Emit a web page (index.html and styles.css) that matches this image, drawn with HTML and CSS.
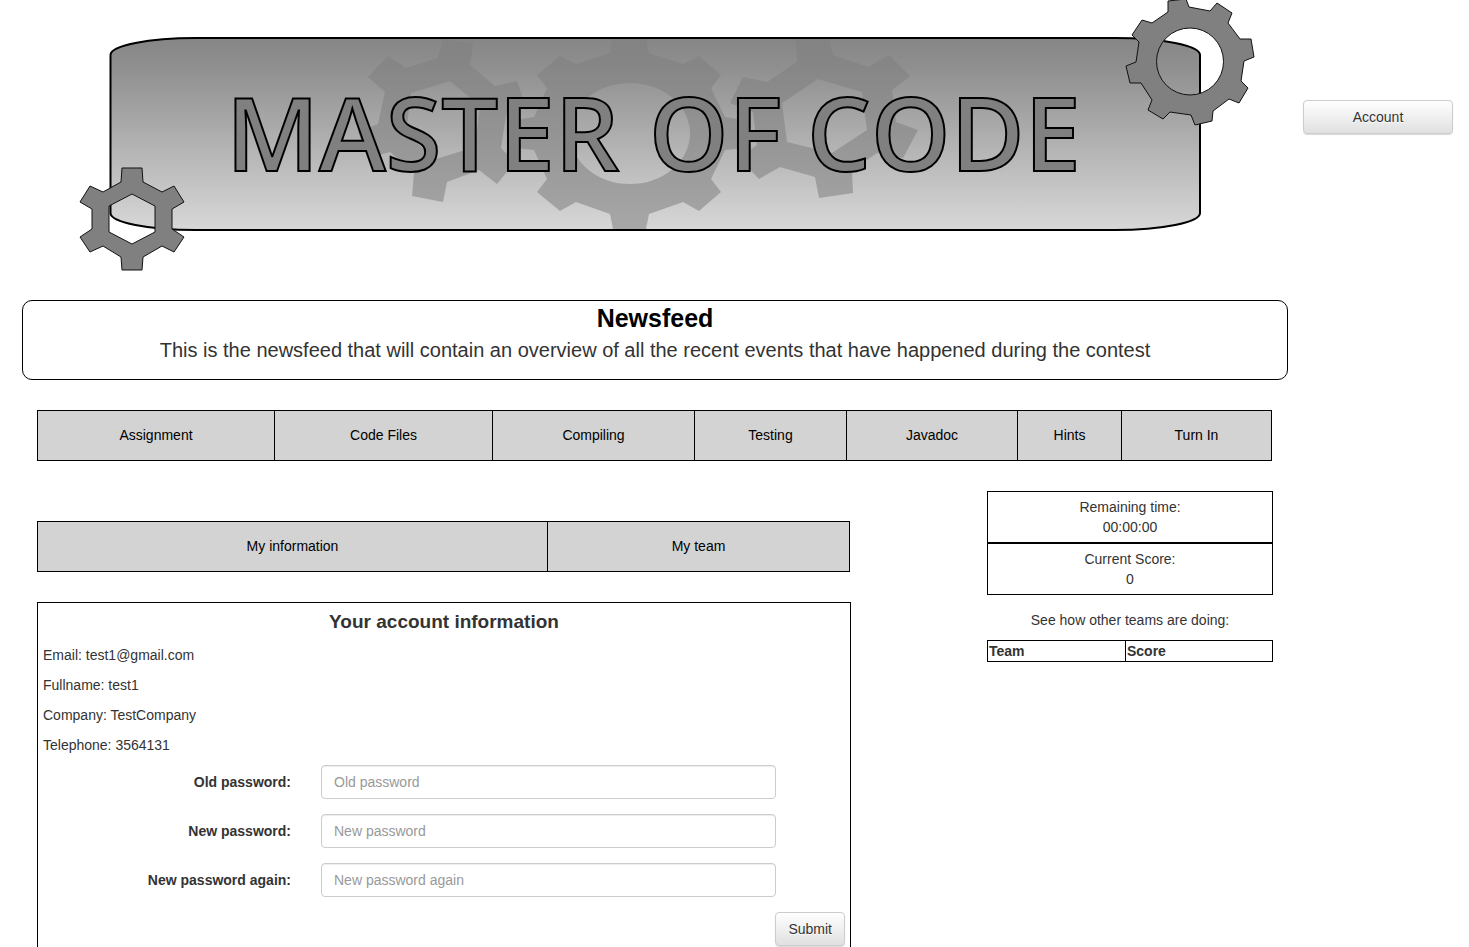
FILE: index.html
```html
<!DOCTYPE html>
<html lang="en">
<head>
<meta charset="utf-8">
<title>Master of Code</title>
<link rel="stylesheet" href="styles.css">
</head>
<body>
<div class="page">
  <header class="header">
    <svg class="banner" viewBox="0 0 1303 272" role="img" aria-label="Master of Code">
      <defs>
        <linearGradient id="steel" x1="0" y1="0" x2="0" y2="1">
          <stop offset="0" stop-color="#868686"/>
          <stop offset="0.15" stop-color="#8f8f8f"/>
          <stop offset="1" stop-color="#d8d8d8"/>
        </linearGradient>
      </defs>
      <rect class="plate" x="110.500" y="38" width="1089.500" height="192" rx="85" ry="17"/>
      <g class="shade">
        <path d="M443 39L473 43L470 65L495 86L517 81L526 107L506 115L501 148L515 162L497 184L479 170L447 182L443 202L412 196L414 172L390 152L368 158L358 132L378 124L385 92L368 77L388 56L406 68L438 58ZM450 81L411 93L406 134L436 159L475 147L480 106Z"/>
        <path d="M612 39H646L649 53L683 64L699 56L721 75L711 88L725 117L743 120V148L725 150L711 179L721 192L699 211L683 202L649 214L646 229H613L610 214L576 202L560 211L537 192L547 179L534 150L516 148V120L534 117L547 88L537 75L560 56L576 64L610 53ZM630 83A60 50.500 0 1 0 630 184A60 50.500 0 1 0 630 83Z"/>
        <path d="M796 39H829L833 55L868 67L889 55L910 76L892 90L896 122L918 130L903 158L877 153L852 170L853 193L819 198L815 177L780 167L759 179L739 158L757 145L753 112L730 103L743 77L767 82L797 62ZM818 79L782 103L787 142L832 153L867 130L862 92Z"/>
      </g>
      <g class="title">
        <text x="226" y="171">MASTER</text>
        <text x="649" y="171">OF</text>
        <text x="807" y="171">CODE</text>
      </g>
      <path class="gear" d="M122 168H142L143 182L162 192L174 186L184 202L172 209V229L184 237L174 252L162 246L143 257L142 270H122L121 257L103 246L90 252L80 237L92 229V209L80 202L90 186L103 192L121 182ZM132 194L155 206V232L132 244L109 232V206Z"/>
      <path class="gear" d="M1168 1L1186 -1L1189 7L1210 11L1217 3L1232 13L1228 23L1240 39H1251L1254 57L1244 61L1241 81L1248 88L1239 103L1229 99L1213 111L1212 121L1195 125L1191 115L1170 112L1163 119L1148 110L1152 100L1141 83H1130L1126 66L1136 62L1139 42L1132 35L1142 20L1152 23L1168 12ZM1190 28A33.500 33.500 0 1 0 1190 95A33.500 33.500 0 1 0 1190 28Z"/>
    </svg>
    <button class="btn account" type="button">Account</button>
  </header>

  <div class="content">
    <section class="newsfeed">
      <h1 class="newsfeed-title">Newsfeed</h1>
      <p class="newsfeed-text">This is the newsfeed that will contain an overview of all the recent events that have happened during the contest</p>
    </section>

    <div class="workspace">
      <nav class="tabs tabs-main" aria-label="Contest">
        <a class="tab" href="#assignment">Assignment</a>
        <a class="tab" href="#files">Code Files</a>
        <a class="tab" href="#compiling">Compiling</a>
        <a class="tab" href="#testing">Testing</a>
        <a class="tab" href="#javadoc">Javadoc</a>
        <a class="tab" href="#hints">Hints</a>
        <a class="tab" href="#turnin">Turn In</a>
      </nav>

      <div class="columns">
        <main class="main">
          <nav class="tabs tabs-account" aria-label="Account">
            <a class="tab" href="#information">My information</a>
            <a class="tab" href="#team">My team</a>
          </nav>
          <section class="card">
            <h2 class="card-title">Your account information</h2>
            <p class="detail">Email: test1@gmail.com</p>
            <p class="detail">Fullname: test1</p>
            <p class="detail">Company: TestCompany</p>
            <p class="detail">Telephone: 3564131</p>
            <form class="form">
              <div class="field">
                <label class="label" for="old">Old password:</label>
                <input class="input" id="old" type="password" placeholder="Old password">
              </div>
              <div class="field">
                <label class="label" for="new">New password:</label>
                <input class="input" id="new" type="password" placeholder="New password">
              </div>
              <div class="field">
                <label class="label" for="again">New password again:</label>
                <input class="input" id="again" type="password" placeholder="New password again">
              </div>
              <button class="btn submit" type="submit">Submit</button>
            </form>
          </section>
        </main>

        <aside class="side">
          <div class="stat"><div>Remaining time:</div><div>00:00:00</div></div>
          <div class="stat"><div>Current Score:</div><div>0</div></div>
          <p class="side-text">See how other teams are doing:</p>
          <table class="scores">
            <thead><tr><th class="col-team" scope="col">Team</th><th scope="col">Score</th></tr></thead>
          </table>
        </aside>
      </div>
    </div>
  </div>
</div>
</body>
</html>
```
FILE: styles.css
```css
* { box-sizing: border-box; }

body {
  margin: 0;
  background: #fff;
  color: #333;
  font: 14px/20px "Liberation Sans", Arial, sans-serif;
}

h1, h2, p { margin: 0; }

.header {
  display: flex;
  align-items: flex-start;
  padding-right: 16px;
}

.banner { flex: 1; min-width: 0; display: block; }
.plate { fill: url(#steel); stroke: #000; stroke-width: 2; }
.shade { fill: #808080; fill-opacity: 0.55; fill-rule: evenodd; }
.gear { fill: #808080; stroke: #111; stroke-width: 1; fill-rule: evenodd; }
.title {
  font: 600 101px "Open Sans", "Noto Sans", sans-serif;
  fill: #808080;
  stroke: #000;
  stroke-width: 2;
}

.btn {
  height: 34px;
  padding: 0 12px;
  border: 1px solid #ccc;
  border-radius: 4px;
  background: linear-gradient(#fff, #e0e0e0);
  box-shadow: 0 1px 1px rgba(0, 0, 0, 0.15);
  color: #333;
  font: inherit;
  text-shadow: 0 1px 0 #fff;
}

.account { width: 150px; margin-top: 100px; }

.content { margin: 28px 181px 0 22px; }

.newsfeed {
  padding: 4px 15px 15px;
  border: 1px solid #000;
  border-radius: 10px;
  text-align: center;
}
.newsfeed-title { margin-bottom: 5px; color: #000; font-size: 25px; line-height: 26px; }
.newsfeed-text { font-size: 20px; line-height: 28px; }

.workspace { padding: 30px 15px 0; }

.tabs { display: grid; border: 1px solid #000; background: #d3d3d3; }
.tabs-main { grid-template-columns: 237fr 218fr 202fr 152fr 171fr 104fr 149fr; margin: 0 1px 30px 0; }
.tabs-account { grid-template-columns: 510fr 301fr; margin: 30px 1px 30px 0; }
.tab {
  padding: 14px 0 15px;
  border-right: 1px solid #000;
  color: #000;
  text-align: center;
  text-decoration: none;
}
.tab:last-child { border-right: 0; }

.columns {
  display: grid;
  grid-template-columns: 814fr 286fr;
  gap: 136px;
  align-items: start;
}

.card { padding: 5px; border: 1px solid #000; }
.card-title { margin-bottom: 10px; font-size: 19px; line-height: 27px; text-align: center; }
.detail { margin-bottom: 10px; }

.form { display: flex; flex-direction: column; gap: 15px; }
.field {
  display: grid;
  grid-template-columns: 248fr 455fr 39fr;
  gap: 30px;
  align-items: center;
}
.label { font-weight: bold; text-align: right; }
.input {
  width: 100%;
  height: 34px;
  padding: 6px 12px;
  border: 1px solid #ccc;
  border-radius: 4px;
  background: #fff;
  box-shadow: inset 0 1px 1px rgba(0, 0, 0, 0.075);
  color: #555;
  font: inherit;
}
.input::placeholder { color: #999; opacity: 1; }
.submit { align-self: flex-end; }

.side { text-align: center; }
.stat { padding: 5px; border: 1px solid #000; }
.side-text { margin: 15px 0 10px; }
.scores { width: 100%; table-layout: fixed; border-collapse: collapse; text-align: left; }
.scores th { padding: 0 1px; border: 1px solid #000; }
.col-team { width: 138px; }
```
